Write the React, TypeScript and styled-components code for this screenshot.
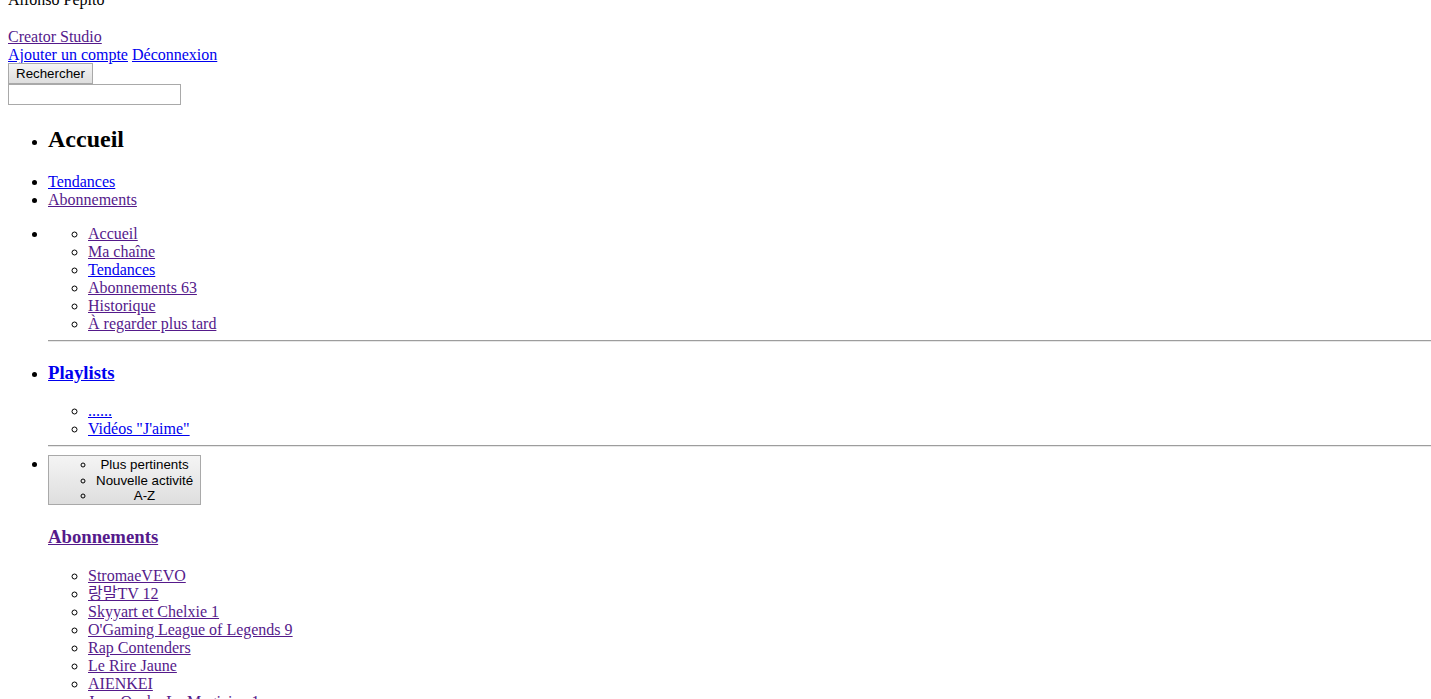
import styled, { createGlobalStyle } from "styled-components";

const GlobalStyle = createGlobalStyle`
  body {
    margin: 0 0 8px 8px;
    font-family: "Liberation Serif", "Times New Roman", "Noto Sans CJK KR", serif;
    font-size: 16px;
    line-height: 18px;
    color: #000;
    background: #fff;
  }
`;

const AccountBlock = styled.div`
  margin-top: -9px;
`;

const UserName = styled.div`
  margin-bottom: 19px;
`;

const TextLink = styled.a<{ $visited?: boolean }>`
  color: ${({ $visited }) => ($visited ? "#551a8b" : "#0000ee")};
  text-decoration: underline;
  cursor: pointer;
`;

const SearchForm = styled.form`
  display: flex;
  flex-direction: column;
  align-items: flex-start;
  margin: -1px 0 0;
`;

const SearchButton = styled.button`
  box-sizing: border-box;
  height: 21px;
  padding: 2px 7px;
  font-family: "Liberation Sans", Arial, sans-serif;
  font-size: 13.333px;
  line-height: 15px;
  color: #000;
  background: linear-gradient(#f4f4f4, #dedede);
  border: 1px solid #a9a9a9;
  border-radius: 0;
`;

const SearchInput = styled.input`
  box-sizing: border-box;
  width: 173px;
  height: 21px;
  padding: 1px 2px;
  border: 1px solid #a9a9a9;
  background: #fff;
  font-family: "Liberation Sans", Arial, sans-serif;
  font-size: 13.333px;
`;

const GuideList = styled.ul`
  margin: 16px 0;
  padding-left: 40px;
  list-style: disc;
`;

const SubList = styled.ul`
  margin: 0;
  padding-left: 40px;
  list-style: circle;
`;

const SectionTitle = styled.h2`
  margin: 19.92px 0;
  font-size: 24px;
  line-height: 28px;
  font-weight: bold;
`;

const GroupTitle = styled.h3`
  margin: 19.72px 0 18.72px;
  font-size: 18.72px;
  line-height: 22px;
  font-weight: bold;
`;

const Divider = styled.hr`
  height: 0;
  margin: 7px 0 8px;
  border: none;
  border-top: 1px solid #9d9d9d;
  border-bottom: 1px solid #e8e8e8;
`;

const SortButton = styled.button`
  box-sizing: border-box;
  vertical-align: top;
  margin-bottom: 1px;
  padding: 1px 7px;
  font-family: "Liberation Sans", Arial, sans-serif;
  font-size: 13.333px;
  line-height: 15.33px;
  color: #000;
  text-align: center;
  background: linear-gradient(#f4f4f4, #dedede);
  border: 1px solid #a9a9a9;
  border-radius: 0;
`;

const SortList = styled.ul`
  margin: 0;
  padding-left: 40px;
  list-style: circle;
`;

const mainLinks = [
  { label: "Accueil", visited: true },
  { label: "Ma chaîne", visited: true },
  { label: "Tendances", visited: false },
  { label: "Abonnements 63", visited: true },
  { label: "Historique", visited: true },
  { label: "À regarder plus tard", visited: true },
];

const subscriptions = [
  "StromaeVEVO",
  "랑말TV 12",
  "Skyyart et Chelxie 1",
  "O'Gaming League of Legends 9",
  "Rap Contenders",
  "Le Rire Jaune",
  "AIENKEI",
  "Jean Onche Le Magicien 1",
];

const App = () => {
  return (
    <>
      <GlobalStyle />
      <AccountBlock>
        <UserName>Alfonso Pepito</UserName>
        <div>
          <TextLink $visited>Creator Studio</TextLink>
        </div>
        <div>
          <TextLink>Ajouter un compte</TextLink> <TextLink>Déconnexion</TextLink>
        </div>
      </AccountBlock>
      <SearchForm onSubmit={(e) => e.preventDefault()}>
        <SearchButton type="submit">Rechercher</SearchButton>
        <SearchInput type="text" />
      </SearchForm>

      <GuideList>
        <li>
          <SectionTitle>Accueil</SectionTitle>
        </li>
      </GuideList>

      <GuideList>
        <li>
          <TextLink>Tendances</TextLink>
        </li>
        <li>
          <TextLink $visited>Abonnements</TextLink>
        </li>
      </GuideList>

      <GuideList>
        <li>
          <SubList>
            {mainLinks.map((l) => (
              <li key={l.label}>
                <TextLink $visited={l.visited}>{l.label}</TextLink>
              </li>
            ))}
          </SubList>
          <Divider />
        </li>
        <li>
          <GroupTitle>
            <TextLink>Playlists</TextLink>
          </GroupTitle>
          <SubList>
            <li>
              <TextLink>......</TextLink>
            </li>
            <li>
              <TextLink>Vidéos "J'aime"</TextLink>
            </li>
          </SubList>
          <Divider />
        </li>
        <li>
          <SortButton type="button">
            <SortList>
              <li>Plus pertinents</li>
              <li>Nouvelle activité</li>
              <li>A-Z</li>
            </SortList>
          </SortButton>
          <GroupTitle>
            <TextLink $visited>Abonnements</TextLink>
          </GroupTitle>
          <SubList>
            {subscriptions.map((s) => (
              <li key={s}>
                <TextLink $visited>{s}</TextLink>
              </li>
            ))}
          </SubList>
        </li>
      </GuideList>
    </>
  );
};

export default App;
